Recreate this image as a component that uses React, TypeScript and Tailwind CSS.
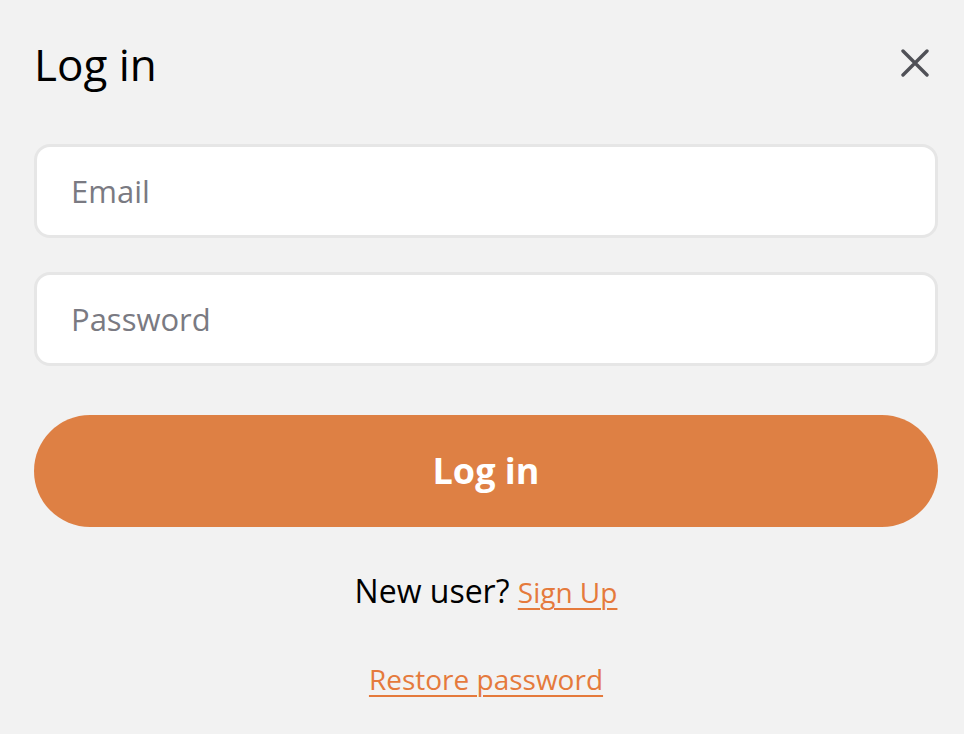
import React from 'react';

const CloseIcon: React.FC = () => (
  <svg width="28" height="28" viewBox="0 0 28 28" fill="none">
    <path d="M2 2 L26 26 M26 2 L2 26" stroke="#505157" strokeWidth="3.4" strokeLinecap="round" />
  </svg>
);

const App: React.FC = () => {
  return (
    <div className="min-h-screen w-full bg-[#f2f2f2] pl-[34px] pr-[26px] pt-[34px] font-['Open_Sans',sans-serif]">
      {/* Header */}
      <div className="flex items-center justify-between">
        <h1 className="text-[44px] leading-[60px] font-normal text-black">Log in</h1>
        <button className="mr-[9px] mt-[-2px]" aria-label="Close">
          <CloseIcon />
        </button>
      </div>

      {/* Fields */}
      <div className="mt-[50px] flex flex-col gap-[34px]">
        <input
          type="email"
          placeholder="Email"
          className="h-[94px] w-full rounded-[16px] border-[3px] border-[#e6e6e6] bg-white px-[34px] text-[31px] text-black outline-none placeholder:text-[#7a7a82]"
        />
        <input
          type="password"
          placeholder="Password"
          className="h-[94px] w-full rounded-[16px] border-[3px] border-[#e6e6e6] bg-white px-[34px] text-[31px] text-black outline-none placeholder:text-[#7a7a82]"
        />
      </div>

      <button className="mt-[49px] flex h-[112px] w-full items-center justify-center rounded-full bg-[#de8044] text-[36px] font-bold text-white">
        Log in
      </button>

      {/* Footer links */}
      <div className="mt-[45px] flex flex-col items-center gap-[49px] leading-[38px]">
        <p className="text-[32px] text-black">
          New user?{' '}
          <a href="#" className="text-[28px] text-[#e57a3c] underline underline-offset-[5px] decoration-[2px]">
            Sign Up
          </a>
        </p>
        <a href="#" className="text-[28px] text-[#e57a3c] underline underline-offset-[5px] decoration-[2px]">
          Restore password
        </a>
      </div>
    </div>
  );
};

export default App;
